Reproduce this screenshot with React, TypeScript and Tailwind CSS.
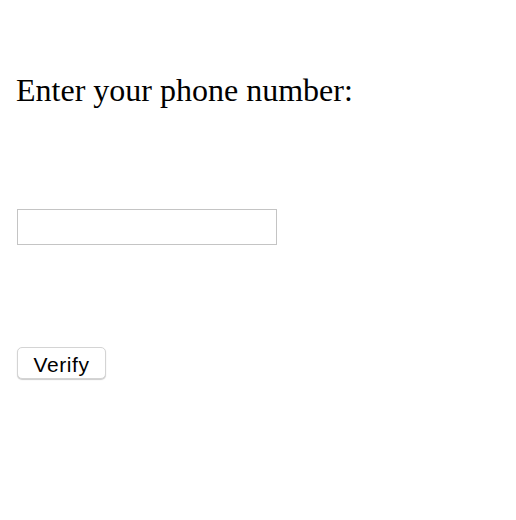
import React, { useState } from "react";

const App = () => {
  const [phone, setPhone] = useState("");

  return (
    <div className="w-[516px] h-[520px] bg-white flex flex-col items-start pl-[16px] pt-[72px]">
      <h1 className="font-['Liberation_Serif',serif] text-[32px] leading-[37px] text-black font-normal">
        Enter your phone number:
      </h1>
      <input
        type="text"
        value={phone}
        onChange={(e) => setPhone(e.target.value)}
        className="mt-[100px] ml-[1px] w-[260px] h-[36px] border border-[#c4c4c4] outline-none px-2 text-[16px] font-['Liberation_Sans',sans-serif]"
      />
      <button
        type="button"
        className="mt-[102px] ml-[1px] w-[89px] h-[32px] pt-[2px] rounded-[5px] border border-[#d4d4d4] bg-white shadow-[0_1px_1px_rgba(0,0,0,0.2)] text-[21px] tracking-[0.6px] text-black font-['Liberation_Sans',sans-serif] leading-none"
      >
        Verify
      </button>
    </div>
  );
};

export default App;
